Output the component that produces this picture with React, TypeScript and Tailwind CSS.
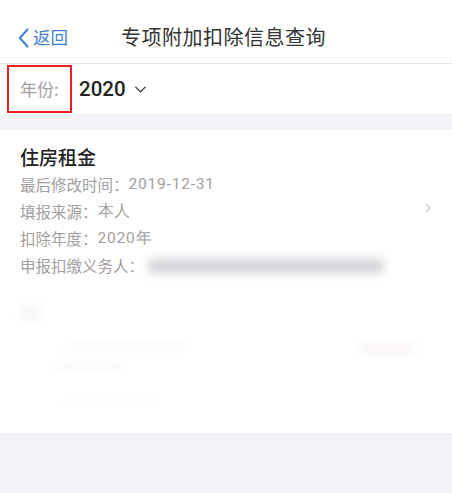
import { ChevronDown, ChevronRight } from 'lucide-react';

const font = { fontFamily: '"Noto Sans CJK SC", "Liberation Sans", sans-serif' };
const num = { fontFamily: 'Roboto, "Liberation Sans", sans-serif' };

const rows = [
  { label: '最后修改时间：', value: '2019-12-31' },
  { label: '填报来源：', value: '本人' },
  { label: '扣除年度：', value: '2020年' },
];

export default function App() {
  return (
    <div className="w-[452px] h-[493px] bg-[#f2f3f7] flex flex-col overflow-hidden" style={font}>
      <div className="h-[64px] bg-white flex items-center relative border-b border-[#e6e6e6]">
        <div className="flex items-center gap-[4px] pl-[18px] pt-[12px] text-[#3f7fd4] text-[17.5px]">
          <svg width="11" height="20" viewBox="0 0 11 20" fill="none" stroke="currentColor" strokeWidth="2" strokeLinecap="round" strokeLinejoin="round">
            <path d="M9.5 1.5 L1.8 10 L9.5 18.5" />
          </svg>
          <span>返回</span>
        </div>
        <div className="absolute left-[121px] top-[22px] text-[20px] text-[#333] tracking-[0.5px]">专项附加扣除信息查询</div>
      </div>

      <div className="h-[50px] bg-white flex items-center">
        <div className="ml-[7px] w-[65px] h-[48px] border-[2.5px] border-[#ea2027] flex items-center pl-[11px] text-[17px] text-[#a0a0a0]">
          年份:
        </div>
        <span className="ml-[7px] text-[20.5px] font-medium text-[#222]" style={num}>2020</span>
        <ChevronDown className="ml-[5px] w-[19px] h-[19px] text-[#333]" strokeWidth={1.7} />
      </div>

      <div className="h-[16px]" />

      <div className="bg-white h-[303px] relative">
        <div className="pl-[20px] pt-[14px]">
          <div className="text-[19px] font-medium text-[#222] leading-[26px]">住房租金</div>
          <div className="mt-[1px] flex flex-col text-[15.5px] text-[#a0a0a0] leading-[27px]">
            {rows.map((r) => (
              <div key={r.label} className="flex">
                <span>{r.label}</span>
                <span className="tracking-[0.8px]" style={num}>{r.value}</span>
              </div>
            ))}
            <div className="flex items-center">
              <span>申报扣缴义务人：</span>
              <div className="ml-[4px] w-[236px] h-[14px] bg-[#d4d4d9] blur-[5px] rounded-sm" />
            </div>
          </div>
        </div>
        <ChevronRight className="absolute right-[16px] top-[70px] w-[16px] h-[16px] text-[#c8c8c8]" strokeWidth={1.6} />

        <div className="absolute left-[20px] top-[175px] w-[20px] h-[16px] bg-[#f2f2f2] blur-[5px] opacity-60" />
        <div className="absolute left-[66px] top-[213px] w-[120px] h-[5px] bg-[#f6f6f6] blur-[4px]" />
        <div className="absolute left-[55px] top-[235px] w-[70px] h-[5px] bg-[#f6f6f6] blur-[4px]" />
        <div className="absolute left-[360px] top-[215px] w-[55px] h-[8px] bg-[#f8f2f2] blur-[4px]" />
        <div className="absolute left-[66px] top-[268px] w-[85px] h-[5px] bg-[#f8f8f8] blur-[4px]" />
      </div>
    </div>
  );
}
